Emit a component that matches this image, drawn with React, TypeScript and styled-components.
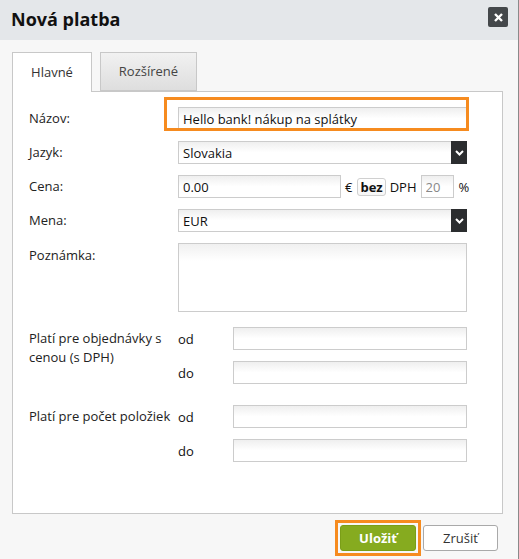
import React from "react";
import styled, { createGlobalStyle } from "styled-components";

const GlobalStyle = createGlobalStyle`
  html, body {
    margin: 0;
    padding: 0;
    background: #f7f7f7;
  }
  * {
    box-sizing: border-box;
  }
  body {
    font-family: "Open Sans", "DejaVu Sans", sans-serif;
    font-size: 13px;
    color: #222;
  }
`;

const Dialog = styled.div`
  width: 519px;
  height: 559px;
  border-right: 1px solid #8a8a8a;
  background: #f7f7f7;
  display: flex;
  flex-direction: column;
`;

const Header = styled.div`
  height: 40px;
  background: #e4e7ea;
  display: flex;
  align-items: center;
  justify-content: space-between;
  padding: 0 10px 0 11px;
`;

const Title = styled.h1`
  margin: 0;
  font-size: 18px;
  font-weight: 700;
  color: #111;
  line-height: 1;
  padding-bottom: 3px;
`;

const CloseButton = styled.button`
  width: 20px;
  height: 20px;
  margin-top: -6px;
  border: none;
  border-radius: 2px;
  background: #44484b;
  display: flex;
  align-items: center;
  justify-content: center;
  padding: 0;
`;

const Body = styled.div`
  flex: 1;
  padding: 12px 15px 0 12px;
  display: flex;
  flex-direction: column;
`;

const Tabs = styled.div`
  display: flex;
  gap: 8px;
  position: relative;
  z-index: 1;
`;

const Tab = styled.div<{ $active?: boolean; $width: number }>`
  width: ${({ $width }) => $width}px;
  height: ${({ $active }) => ($active ? "40px" : "39px")};
  margin-bottom: ${({ $active }) => ($active ? "-1px" : "0")};
  border: 1px solid #c8c8c8;
  border-bottom: ${({ $active }) => ($active ? "none" : "1px solid #c8c8c8")};
  background: ${({ $active }) => ($active ? "#fff" : "linear-gradient(#f1f1f1, #dedede)")};
  color: ${({ $active }) => ($active ? "#333" : "#444")};
  display: flex;
  align-items: center;
  justify-content: center;
  padding-bottom: ${({ $active }) => ($active ? "2px" : "1px")};
`;

const Panel = styled.div`
  height: 423px;
  background: #fff;
  border: 1px solid #c8c8c8;
  padding: 15px 35px 0 16px;
  display: flex;
  flex-direction: column;
`;

const Row = styled.div<{ $gap?: number }>`
  display: grid;
  grid-template-columns: 149px 1fr;
  align-items: center;
  margin-top: ${({ $gap }) => $gap ?? 11}px;
  &:first-child {
    margin-top: 0;
  }
`;

const TopRow = styled(Row)`
  align-items: start;
`;

const Label = styled.label<{ $top?: number }>`
  color: #222;
  line-height: 19px;
  padding-top: ${({ $top }) => $top ?? 0}px;
`;

const FieldCell = styled.div`
  position: relative;
  display: flex;
  align-items: center;
`;

const fieldSurface = `
  border: 1px solid #cccccc;
  background: linear-gradient(#efefef, #ffffff 50%);
  font-family: "Open Sans", "DejaVu Sans", sans-serif;
  font-size: 13px;
  color: #111;
  outline: none;
`;

const TextInput = styled.input<{ $width?: number; $muted?: boolean; $ml?: number }>`
  ${fieldSurface}
  height: 23px;
  width: ${({ $width }) => ($width ? `${$width}px` : "100%")};
  margin-left: ${({ $ml }) => $ml ?? 0}px;
  padding: 0 4px;
  color: ${({ $muted }) => ($muted ? "#888" : "#111")};
`;

const TextArea = styled.textarea`
  ${fieldSurface}
  background: linear-gradient(#f0f0f0, #ffffff 25%);
  width: 100%;
  height: 69px;
  resize: none;
  display: block;
`;

const Highlight = styled.div<{ $l: number; $t: number; $r: number; $b: number }>`
  position: absolute;
  left: ${({ $l }) => -$l}px;
  top: ${({ $t }) => -$t}px;
  right: ${({ $r }) => -$r}px;
  bottom: ${({ $b }) => -$b}px;
  border: 3px solid #f68b1f;
  pointer-events: none;
`;

const SelectBox = styled.div`
  ${fieldSurface}
  height: 23px;
  width: 100%;
  display: flex;
  align-items: center;
  justify-content: space-between;
  padding-left: 4px;
  border-right: none;
`;

const SelectArrow = styled.div`
  width: 16px;
  height: 23px;
  margin-top: -1px;
  margin-bottom: -1px;
  background: #2b2d2f;
  display: flex;
  align-items: center;
  justify-content: center;
`;

const Unit = styled.span<{ $ml?: number }>`
  color: #111;
  margin-left: ${({ $ml }) => $ml ?? 5}px;
`;

const Pill = styled.span`
  margin-left: 5px;
  height: 18px;
  padding: 0 2px;
  border: 1px solid #d0d0d0;
  border-radius: 3px;
  font-weight: 700;
  color: #111;
  display: flex;
  align-items: center;
  background: linear-gradient(#fff, #f6f6f6);
`;

const RangeGroup = styled.div<{ $gap: number }>`
  display: grid;
  grid-template-columns: 149px 1fr;
  margin-top: ${({ $gap }) => $gap}px;
`;

const RangeLabel = styled.div`
  line-height: 19px;
  padding-top: 2px;
  padding-right: 6px;
`;

const RangeList = styled.div`
  display: flex;
  flex-direction: column;
  gap: 11px;
`;

const RangeRow = styled.div`
  display: grid;
  grid-template-columns: 55px 1fr;
  align-items: center;
`;

const SubLabel = styled.span`
  color: #111;
`;

const Footer = styled.div`
  display: flex;
  justify-content: flex-end;
  align-items: center;
  gap: 2px;
  margin-top: 6px;
  padding-right: 5px;
`;

const SaveFrame = styled.div`
  border: 3px solid #f68b1f;
  padding: 2px;
  display: flex;
`;

const Button = styled.button<{ $primary?: boolean }>`
  height: 26px;
  width: ${({ $primary }) => ($primary ? "76px" : "75px")};
  border-radius: 3px;
  font-family: "Open Sans", "DejaVu Sans", sans-serif;
  font-size: 13px;
  font-weight: ${({ $primary }) => ($primary ? 700 : 400)};
  color: ${({ $primary }) => ($primary ? "#fff" : "#333")};
  background: ${({ $primary }) => ($primary ? "#86ab1f" : "#fff")};
  border: 1px solid ${({ $primary }) => ($primary ? "#7a9e18" : "#a9a9a9")};
  padding: 0;
`;

const Chevron = () => (
  <svg width="9" height="6" viewBox="0 0 9 6">
    <path d="M1 1l3.5 3.5L8 1" fill="none" stroke="#fff" strokeWidth="2" />
  </svg>
);

const CloseIcon = () => (
  <svg width="9" height="9" viewBox="0 0 9 9">
    <path d="M1 1l7 7M8 1l-7 7" stroke="#fff" strokeWidth="2.4" />
  </svg>
);

export default function App() {
  return (
    <>
      <GlobalStyle />
      <Dialog>
        <Header>
          <Title>Nová platba</Title>
          <CloseButton aria-label="close">
            <CloseIcon />
          </CloseButton>
        </Header>
        <Body>
          <Tabs>
            <Tab $active $width={80}>Hlavné</Tab>
            <Tab $width={97}>Rozšírené</Tab>
          </Tabs>
          <Panel>
            <Row>
              <Label>Názov:</Label>
              <FieldCell>
                <TextInput defaultValue="Hello bank! nákup na splátky" />
                <Highlight $l={14} $t={10} $r={2} $b={1} />
              </FieldCell>
            </Row>
            <Row>
              <Label>Jazyk:</Label>
              <SelectBox>
                Slovakia
                <SelectArrow>
                  <Chevron />
                </SelectArrow>
              </SelectBox>
            </Row>
            <Row>
              <Label>Cena:</Label>
              <FieldCell>
                <TextInput $width={163} defaultValue="0.00" />
                <Unit $ml={4}>€</Unit>
                <Pill>bez</Pill>
                <Unit $ml={4}>DPH</Unit>
                <TextInput $width={33} $ml={4} $muted defaultValue="20" />
                <Unit>%</Unit>
              </FieldCell>
            </Row>
            <Row>
              <Label>Mena:</Label>
              <SelectBox>
                EUR
                <SelectArrow>
                  <Chevron />
                </SelectArrow>
              </SelectBox>
            </Row>
            <TopRow>
              <Label $top={3}>Poznámka:</Label>
              <TextArea />
            </TopRow>
            <RangeGroup $gap={15}>
              <RangeLabel>Platí pre objednávky s cenou (s DPH)</RangeLabel>
              <RangeList>
                <RangeRow>
                  <SubLabel>od</SubLabel>
                  <TextInput />
                </RangeRow>
                <RangeRow>
                  <SubLabel>do</SubLabel>
                  <TextInput />
                </RangeRow>
              </RangeList>
            </RangeGroup>
            <RangeGroup $gap={21}>
              <RangeLabel>Platí pre počet položiek</RangeLabel>
              <RangeList>
                <RangeRow>
                  <SubLabel>od</SubLabel>
                  <TextInput />
                </RangeRow>
                <RangeRow>
                  <SubLabel>do</SubLabel>
                  <TextInput />
                </RangeRow>
              </RangeList>
            </RangeGroup>
          </Panel>
          <Footer>
            <SaveFrame>
              <Button $primary>Uložiť</Button>
            </SaveFrame>
            <Button>Zrušiť</Button>
          </Footer>
        </Body>
      </Dialog>
    </>
  );
}
